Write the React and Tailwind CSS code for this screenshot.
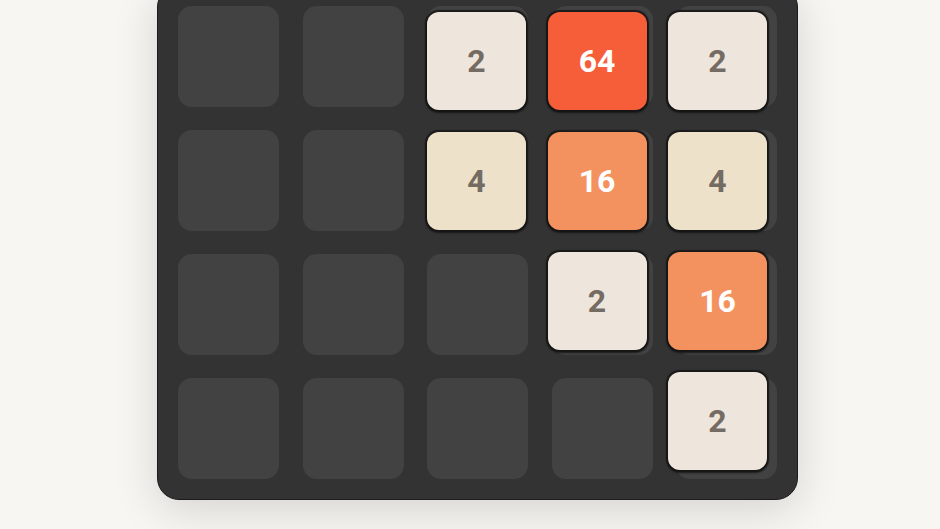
import React from 'react';

const SIZE = 5;
const ROWS = 4;

// tiles currently on the board: [row, col, value]
const tiles = [
  [0, 2, 2], [0, 3, 64], [0, 4, 2],
  [1, 2, 4], [1, 3, 16], [1, 4, 4],
  [2, 3, 2], [2, 4, 16],
  [3, 4, 2],
];

const tileStyles = {
  2: 'bg-[#eee5dc] text-[#746b62]',
  4: 'bg-[#ede1ca] text-[#746b62]',
  16: 'bg-[#f4925f] text-white',
  64: 'bg-[#f55e39] text-white',
};

const Tile = ({ row, col, value }) => {
  const left = 28 + col * 120.5;
  const top = 26 + row * 120;
  return (
    <div
      className={`absolute w-[99px] h-[98px] rounded-[12px] flex items-center justify-center text-[32px] font-bold shadow-[0_0_1px_1.5px_rgba(20,20,20,0.85),0_2px_2px_1px_rgba(15,15,15,0.7)] ${tileStyles[value]}`}
      style={{ left, top }}
    >
      {value}
    </div>
  );
};

const Board = () => (
  <div className="relative bg-[#333333] rounded-[22px] border-[1.5px] border-[#1c1c1c] p-[20px] shadow-[0_10px_45px_rgba(0,0,0,0.14)]">
    <div className="grid grid-cols-5 gap-x-[23.5px] gap-y-[23px]">
      {Array.from({ length: SIZE * ROWS }).map((_, i) => (
        <div key={i} className="w-[101px] h-[101px] rounded-[14px] bg-[#424242]" />
      ))}
    </div>
    {tiles.map(([r, c, v]) => (
      <Tile key={`${r}-${c}`} row={r} col={c} value={v} />
    ))}
  </div>
);

export default function App() {
  return (
    <div
      className="w-[940px] h-[529px] overflow-hidden bg-[#f8f6f2] flex items-end pl-[157px] pb-[29px]"
      style={{ fontFamily: 'Roboto, "Liberation Sans", sans-serif' }}
    >
      <Board />
    </div>
  );
}
